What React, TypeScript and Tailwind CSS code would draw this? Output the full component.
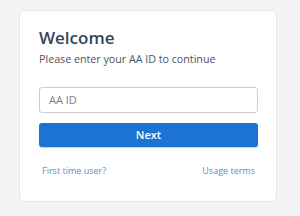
export default function App() {
  return (
    <div className="min-h-[216px] w-[300px] bg-[#f3f3f3] pt-[10px] pl-[19px]" style={{ fontFamily: '"Open Sans", "Noto Sans", sans-serif' }}>
      <div className="w-[258px] h-[192px] rounded-[5px] border border-[#e3e5e8] bg-white pl-[19px] pr-[19px] pt-[16px]">
        <h1 className="text-[17px] font-semibold leading-[22px] text-[#34455a]">Welcome</h1>
        <p className="mt-[2px] text-[10.7px] leading-[16px] text-[#4a5566]">Please enter your AA ID to continue</p>
        <div className="mt-[20px] flex h-[26px] w-[219px] items-center rounded-[3px] border border-[#c9cdd2] px-[9px] text-[11px] text-[#7a7f86]">
          AA ID
        </div>
        <button className="mt-[10px] flex h-[24px] w-[219px] items-center justify-center rounded-[3px] bg-[#1b74d4] text-[11px] font-semibold text-white shadow-[0_1px_1px_rgba(0,0,0,0.2)]">
          Next
        </button>
        <div className="mt-[18px] flex w-[219px] justify-between px-[3px] text-[9px] leading-[12px] text-[#5d8ad8]">
          <span>First time user?</span>
          <span>Usage terms</span>
        </div>
      </div>
    </div>
  )
}
